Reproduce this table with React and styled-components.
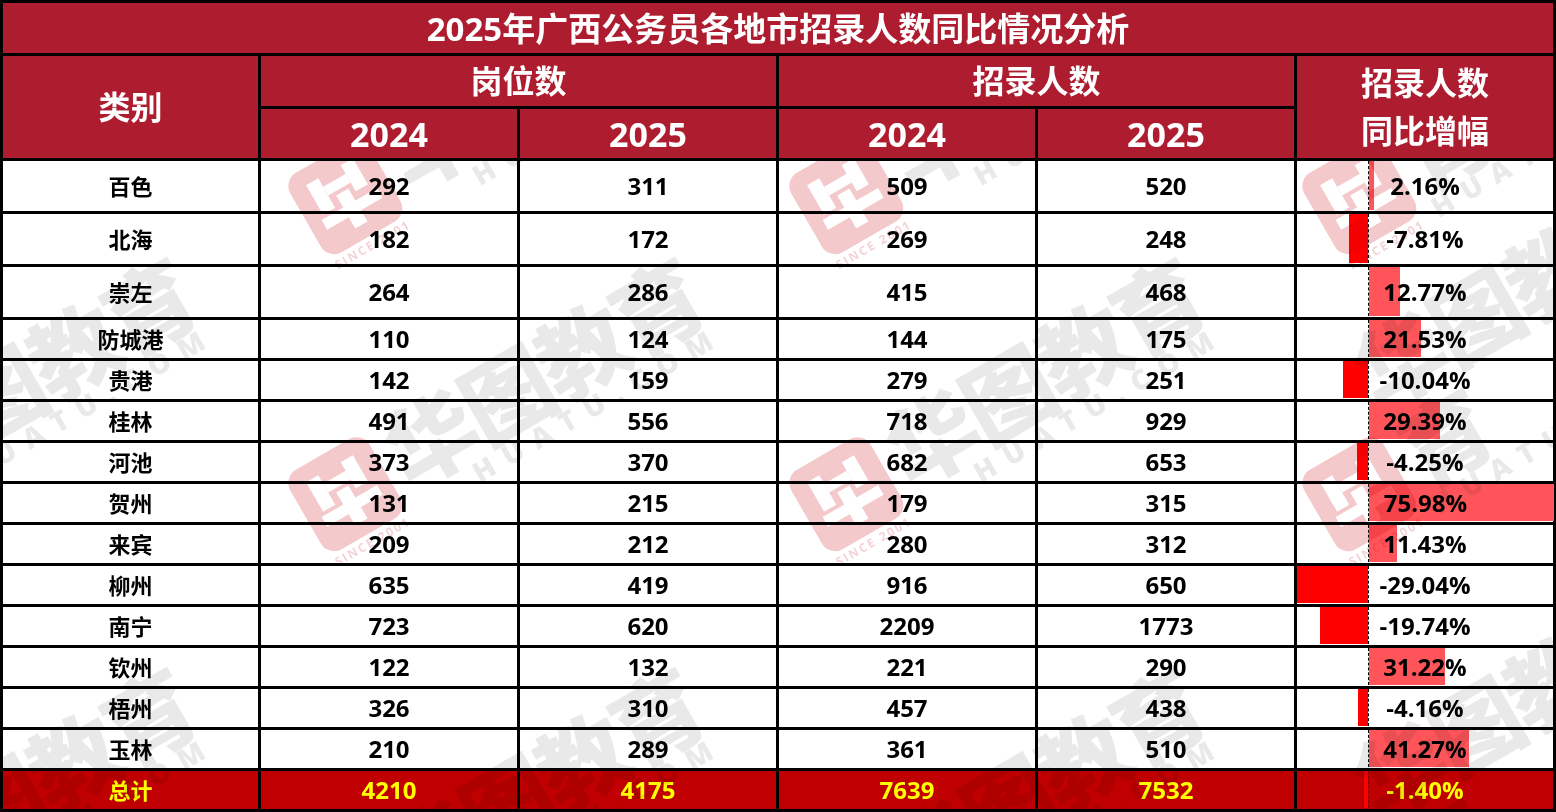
import React from 'react';
import styled, {createGlobalStyle} from 'styled-components';

const HEAD_RED = '#AE1C2F';
const TOTAL_RED = '#C00000';
const FONT = '"Open Sans", "Noto Sans CJK SC", sans-serif';

const GlobalStyle = createGlobalStyle`
  html, body {
    margin: 0;
    padding: 0;
    background: #fff;
  }
  body {
    font-family: ${FONT};
    color: #000;
  }
`;

// [city, jobs2024, jobs2025, hires2024, hires2025, change %]
const cities = [
  ['百色', 292, 311, 509, 520, 2.16],
  ['北海', 182, 172, 269, 248, -7.81],
  ['崇左', 264, 286, 415, 468, 12.77],
  ['防城港', 110, 124, 144, 175, 21.53],
  ['贵港', 142, 159, 279, 251, -10.04],
  ['桂林', 491, 556, 718, 929, 29.39],
  ['河池', 373, 370, 682, 653, -4.25],
  ['贺州', 131, 215, 179, 315, 75.98],
  ['来宾', 209, 212, 280, 312, 11.43],
  ['柳州', 635, 419, 916, 650, -29.04],
  ['南宁', 723, 620, 2209, 1773, -19.74],
  ['钦州', 122, 132, 221, 290, 31.22],
  ['梧州', 326, 310, 457, 438, -4.16],
  ['玉林', 210, 289, 361, 510, 41.27],
];
const total = ['总计', 4210, 4175, 7639, 7532, -1.40];

// data bar scale, same as the sheet's automatic min / max
const MIN = -29.04;
const MAX = 75.98;
const BAR_SPACE = 256;
const PX_PER_PCT = BAR_SPACE / (MAX - MIN);
const AXIS = -MIN * PX_PER_PCT;

const COL_WIDTHS = [258, 259, 259, 259, 259];

const Page = styled.div`
  position: relative;
  width: 1556px;
  height: 812px;
  overflow: hidden;
`;

const Sheet = styled.table`
  width: 1556px;
  table-layout: fixed;
  border-collapse: collapse;
  border: 3px solid #000;
`;

const Row = styled.tr`
  height: ${p => p.$h}px;
  background: ${p => p.$total ? TOTAL_RED : 'transparent'};
`;

const TitleCell = styled.th`
  background: ${HEAD_RED};
  color: #fff;
  font-size: 33px;
  font-weight: 700;
  line-height: 1;
  padding: 0;
  border: 3px solid #000;
  text-align: center;
  vertical-align: middle;
`;

const HeadCell = styled.th`
  background: ${HEAD_RED};
  color: #fff;
  font-size: ${p => p.$size || 32}px;
  font-weight: 700;
  line-height: ${p => p.$lh || 1};
  padding: 0;
  border: 3px solid #000;
  text-align: center;
  vertical-align: middle;
`;

const Cell = styled.td`
  font-size: ${p => p.$name ? 22 : 24}px;
  font-weight: 700;
  line-height: 1;
  color: ${p => p.$total ? '#FFFF00' : '#000'};
  padding: 0;
  border: 3px solid #000;
  text-align: center;
  vertical-align: middle;
`;

const PctCell = styled.td`
  padding: 0;
  border: 3px solid #000;
  vertical-align: top;
`;

const PctStack = styled.div`
  display: grid;
  height: ${p => p.$h}px;

  & > * {
    grid-area: 1 / 1;
  }
`;

const BarLayer = styled.div`
  display: flex;
  padding-bottom: 1px;
`;

const NegSide = styled.div`
  display: flex;
  justify-content: flex-end;
  flex-shrink: 0;
`;

const Axis = styled.div`
  width: 0;
  flex-shrink: 0;
  border-left: 1px dashed ${p => p.$total ? '#7a0000' : '#000'};
`;

const Bar = styled.div`
  background: ${p => p.$neg ? '#FF0000' : '#FF555A'};
  flex-shrink: 0;
`;

const PctText = styled.div`
  display: flex;
  align-items: center;
  justify-content: center;
  font-size: 24px;
  font-weight: 700;
  line-height: 1;
  color: ${p => p.$total ? '#FFFF00' : '#000'};
  padding-bottom: 1px;
`;

// faint brand watermark laid over the body rows
const Watermarks = styled.div`
  position: absolute;
  left: 0;
  right: 0;
  top: 160px;
  bottom: 0;
  overflow: hidden;
  pointer-events: none;
  mix-blend-mode: multiply;
`;

const Mark = styled.div`
  position: absolute;
  height: 112px;
  display: flex;
  align-items: flex-end;
  gap: 12px;
  transform: rotate(-30deg);
  transform-origin: left bottom;
`;

const MarkLogo = styled.div`
  display: flex;
  flex-direction: column;
  align-items: center;
  gap: 3px;
  color: rgba(200, 30, 40, 0.2);
  font-size: 12px;
  font-weight: 700;
  letter-spacing: 2px;
  line-height: 1;
`;

const MarkWords = styled.div`
  display: flex;
  flex-direction: column;
  align-items: flex-end;
  color: rgba(0, 0, 0, 0.085);
  font-family: "Noto Sans CJK SC", sans-serif;
  font-weight: 900;
`;

const MarkName = styled.span`
  font-size: 90px;
  line-height: 1;
  letter-spacing: -3px;
`;

const MarkSite = styled.span`
  font-family: "Open Sans", sans-serif;
  font-size: 28px;
  line-height: 1;
  letter-spacing: 12px;
  margin-top: -2px;
`;

const LogoGlyph = () => (
  <svg width="92" height="92" viewBox="0 0 92 92">
    <rect x="0" y="0" width="92" height="92" rx="16" fill="rgba(205,30,40,0.24)"/>
    <rect x="18" y="16" width="14" height="34" fill="#fff"/>
    <rect x="58" y="16" width="14" height="30" fill="#fff"/>
    <rect x="32" y="26" width="26" height="10" fill="#fff"/>
    <rect x="14" y="54" width="64" height="11" fill="#fff"/>
    <rect x="39" y="40" width="14" height="38" fill="#fff"/>
  </svg>
);

// bottom-left corner of each mark before it is turned, page coordinates
const markSpots = [
  [336, 273], [837, 273], [1350, 273],
  [-172, 570], [336, 570], [837, 570], [1350, 570],
  [-172, 980], [336, 980], [837, 980], [1350, 980],
];

const Watermark = ({x, y}) => (
  <Mark style={{left: x, top: y - 160 - 112}}>
    <MarkLogo>
      <LogoGlyph/>
      <span>SINCE 2001</span>
    </MarkLogo>
    <MarkWords>
      <MarkName>华图教育</MarkName>
      <MarkSite>HUATU.COM</MarkSite>
    </MarkWords>
  </Mark>
);

const PctBars = ({value, h, isTotal}) => {
  const w = Math.abs(value) * PX_PER_PCT;
  const neg = value < 0;
  return (
    <PctStack $h={h}>
      <BarLayer>
        <NegSide style={{width: AXIS}}>
          {neg && <Bar $neg style={{width: w}}/>}
        </NegSide>
        <Axis $total={isTotal}/>
        {!neg && <Bar style={{width: w}}/>}
      </BarLayer>
      <PctText $total={isTotal}>{value.toFixed(2)}%</PctText>
    </PctStack>
  );
};

const DataRow = ({data, h, isTotal}) => {
  const [name, a, b, c, d, pct] = data;
  return (
    <Row $h={h} $total={isTotal}>
      <Cell $name $total={isTotal}>{name}</Cell>
      <Cell $total={isTotal}>{a}</Cell>
      <Cell $total={isTotal}>{b}</Cell>
      <Cell $total={isTotal}>{c}</Cell>
      <Cell $total={isTotal}>{d}</Cell>
      <PctCell>
        <PctBars value={pct} h={h - 3} isTotal={isTotal}/>
      </PctCell>
    </Row>
  );
};

export default function App() {
  return (
    <Page>
      <GlobalStyle/>
      <Sheet>
        <colgroup>
          {COL_WIDTHS.map((w, i) => <col key={i} style={{width: w}}/>)}
          <col/>
        </colgroup>
        <thead>
          <Row $h={53}>
            <TitleCell colSpan={6}>2025年广西公务员各地市招录人数同比情况分析</TitleCell>
          </Row>
          <Row $h={53}>
            <HeadCell rowSpan={2}>类别</HeadCell>
            <HeadCell colSpan={2}>岗位数</HeadCell>
            <HeadCell colSpan={2}>招录人数</HeadCell>
            <HeadCell rowSpan={2} $lh={1.5}>招录人数<br/>同比增幅</HeadCell>
          </Row>
          <Row $h={52}>
            <HeadCell $size={34}>2024</HeadCell>
            <HeadCell $size={34}>2025</HeadCell>
            <HeadCell $size={34}>2024</HeadCell>
            <HeadCell $size={34}>2025</HeadCell>
          </Row>
        </thead>
        <tbody>
          {cities.map((c, i) => (
            <DataRow key={c[0]} data={c} h={i < 3 ? 53 : 41}/>
          ))}
          <DataRow data={total} h={41} isTotal/>
        </tbody>
      </Sheet>
      <Watermarks>
        {markSpots.map(([x, y]) => <Watermark key={`${x}-${y}`} x={x} y={y}/>)}
      </Watermarks>
    </Page>
  );
}
